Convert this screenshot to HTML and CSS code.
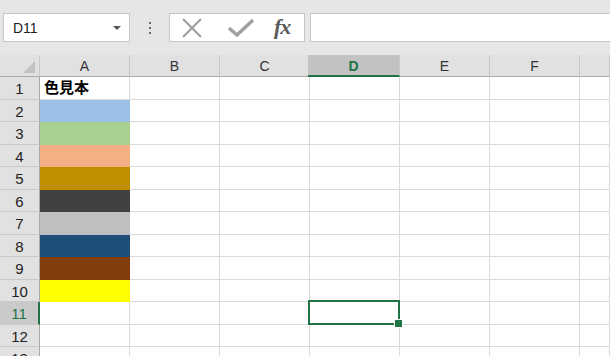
FILE: index.html
```html
<!DOCTYPE html>
<html lang="ja">
<head>
    <meta charset="UTF-8">
    <meta name="viewport" content="width=device-width, initial-scale=1.0">
    <title>色見本</title>
    <link rel="stylesheet" href="styles.css">
</head>
<body>
    <div class="toolbar">
        <div class="namebox">
            <span>D11</span>
            <span class="caret"></span>
        </div>
        <div class="grip"><i></i><i></i><i></i></div>
        <div class="fxbox">
            <svg class="ico" width="22" height="20" viewBox="0 0 22 20">
                <path d="M2 1 L20 19 M20 1 L2 19" stroke="#a0a0a0" stroke-width="2.2" fill="none"/>
            </svg>
            <svg class="ico" width="26" height="18" viewBox="0 0 26 18">
                <path d="M1 9 L9 16 L25 1" stroke="#a0a0a0" stroke-width="3.4" fill="none"/>
            </svg>
            <span class="fx">fx</span>
        </div>
        <div class="formula"></div>
    </div>

    <div class="sheet">
        <div class="row head">
            <div class="corner"><span></span></div>
            <div class="ch">A</div><div class="ch">B</div><div class="ch">C</div>
            <div class="ch on">D</div><div class="ch">E</div><div class="ch">F</div><div class="ch"></div>
        </div>
        <div class="row">
            <div class="rh">1</div><div class="c title">色見本</div>
            <div class="c"></div><div class="c"></div><div class="c"></div><div class="c"></div><div class="c"></div><div class="c"></div>
        </div>
        <div class="row">
            <div class="rh">2</div><div class="c fill-blue"></div>
            <div class="c"></div><div class="c"></div><div class="c"></div><div class="c"></div><div class="c"></div><div class="c"></div>
        </div>
        <div class="row">
            <div class="rh">3</div><div class="c fill-green"></div>
            <div class="c"></div><div class="c"></div><div class="c"></div><div class="c"></div><div class="c"></div><div class="c"></div>
        </div>
        <div class="row">
            <div class="rh">4</div><div class="c fill-orange"></div>
            <div class="c"></div><div class="c"></div><div class="c"></div><div class="c"></div><div class="c"></div><div class="c"></div>
        </div>
        <div class="row">
            <div class="rh">5</div><div class="c fill-gold"></div>
            <div class="c"></div><div class="c"></div><div class="c"></div><div class="c"></div><div class="c"></div><div class="c"></div>
        </div>
        <div class="row">
            <div class="rh">6</div><div class="c fill-dark"></div>
            <div class="c"></div><div class="c"></div><div class="c"></div><div class="c"></div><div class="c"></div><div class="c"></div>
        </div>
        <div class="row">
            <div class="rh">7</div><div class="c fill-silver"></div>
            <div class="c"></div><div class="c"></div><div class="c"></div><div class="c"></div><div class="c"></div><div class="c"></div>
        </div>
        <div class="row">
            <div class="rh">8</div><div class="c fill-navy"></div>
            <div class="c"></div><div class="c"></div><div class="c"></div><div class="c"></div><div class="c"></div><div class="c"></div>
        </div>
        <div class="row">
            <div class="rh">9</div><div class="c fill-brown"></div>
            <div class="c"></div><div class="c"></div><div class="c"></div><div class="c"></div><div class="c"></div><div class="c"></div>
        </div>
        <div class="row">
            <div class="rh">10</div><div class="c fill-yellow"></div>
            <div class="c"></div><div class="c"></div><div class="c"></div><div class="c"></div><div class="c"></div><div class="c"></div>
        </div>
        <div class="row">
            <div class="rh on">11</div><div class="c"></div>
            <div class="c"></div><div class="c"></div><div class="c sel"></div><div class="c"></div><div class="c"></div><div class="c"></div>
        </div>
        <div class="row">
            <div class="rh">12</div><div class="c"></div>
            <div class="c"></div><div class="c"></div><div class="c"></div><div class="c"></div><div class="c"></div><div class="c"></div>
        </div>
        <div class="row">
            <div class="rh">13</div><div class="c"></div>
            <div class="c"></div><div class="c"></div><div class="c"></div><div class="c"></div><div class="c"></div><div class="c"></div>
        </div>
    </div>
</body>
</html>
```

FILE: styles.css
```css
* {
    box-sizing: border-box;
}
body {
    margin: 0;
    background: #fff;
    font-family: 'Liberation Sans', Arial, sans-serif;
    overflow: hidden;
    height: 356px;
}
.toolbar {
    background: #e6e6e6;
    height: 55px;
    padding-top: 13px;
    padding-left: 3px;
    display: flex;
    align-items: flex-start;
}
.namebox {
    width: 127px;
    height: 29px;
    background: #fff;
    border: 1px solid #c6c6c6;
    display: flex;
    align-items: center;
    justify-content: space-between;
    padding: 0 8px 0 9px;
    font-size: 14px;
    color: #222;
}
.caret {
    width: 0;
    height: 0;
    border-left: 4px solid transparent;
    border-right: 4px solid transparent;
    border-top: 4px solid #555;
}
.grip {
    width: 39px;
    height: 29px;
    display: flex;
    flex-direction: column;
    align-items: center;
    justify-content: center;
    gap: 3px;
}
.grip i {
    width: 2px;
    height: 2px;
    background: #6a6a6a;
}
.fxbox {
    width: 136px;
    height: 29px;
    background: #fff;
    border: 1px solid #c6c6c6;
    display: flex;
    align-items: center;
    padding-left: 11px;
}
.fxbox .ico + .ico {
    margin-left: 25px;
}
.fx {
    margin-left: 20px;
    font-family: 'Liberation Serif', 'Times New Roman', serif;
    font-style: italic;
    font-weight: bold;
    font-size: 22px;
    color: #5a5a5a;
    letter-spacing: -1px;
    line-height: 1;
    margin-top: -2px;
}
.formula {
    flex: 1;
    margin-left: 5px;
    height: 29px;
    background: #fff;
    border: 1px solid #c6c6c6;
    border-right: none;
}

.sheet {
    height: 301px;
    overflow: hidden;
}
.row {
    display: grid;
    grid-template-columns: 40px repeat(6, 90px) 1fr;
    height: 22.5px;
}
.row.head {
    height: 22px;
    background: #e1e1e1;
}
.corner {
    position: relative;
    border-right: 1px solid #c9c9c9;
    border-bottom: 1px solid #a9a9a9;
}
.corner span {
    position: absolute;
    right: 4px;
    bottom: 3px;
    width: 0;
    height: 0;
    border-left: 12px solid transparent;
    border-bottom: 12px solid #c2c2c2;
}
.ch {
    border-right: 1px solid #c9c9c9;
    border-bottom: 1px solid #a9a9a9;
    display: flex;
    align-items: center;
    justify-content: center;
    font-size: 14px;
    color: #333;
    padding-top: 1px;
}
.ch.on {
    background: #c2c2c2;
    color: #217346;
    font-weight: bold;
    border-bottom: 2px solid #217346;
    margin-left: -2px;
}
.rh {
    background: #e1e1e1;
    border-right: 1px solid #a9a9a9;
    border-bottom: 1px solid #c9c9c9;
    display: flex;
    align-items: center;
    justify-content: center;
    font-size: 15px;
    color: #222;
    padding-top: 2px;
}
.rh.on {
    background: #cacaca;
    color: #217346;
    border-right: 2px solid #217346;
}
.c {
    border-right: 1px solid #dadada;
    border-bottom: 1px solid #dadada;
}
.title {
    font-family: 'Noto Sans CJK JP', 'Noto Sans CJK SC', sans-serif;
    font-weight: bold;
    font-size: 15px;
    line-height: 20px;
    padding-left: 4px;
    color: #000;
}
.fill-blue { background: #9bc2e6; border-color: #9bc2e6; }
.fill-green { background: #a9d08e; border-color: #a9d08e; }
.fill-orange { background: #f4b084; border-color: #f4b084; }
.fill-gold { background: #bf8f00; border-color: #bf8f00; }
.fill-dark { background: #404040; border-color: #404040; }
.fill-silver { background: #bfbfbf; border-color: #bfbfbf; }
.fill-navy { background: #1f4e78; border-color: #1f4e78; }
.fill-brown { background: #833c0c; border-color: #833c0c; }
.fill-yellow { background: #ffff00; border-color: #ffff00; }

.sel {
    position: relative;
}
.sel::after {
    content: '';
    position: absolute;
    left: -2px;
    top: -2px;
    right: -1px;
    bottom: -1px;
    border: 2px solid #217346;
}
.sel::before {
    content: '';
    position: absolute;
    right: -4px;
    bottom: -4px;
    width: 7px;
    height: 7px;
    background: #217346;
    border: 1px solid #fff;
    z-index: 1;
}
```
